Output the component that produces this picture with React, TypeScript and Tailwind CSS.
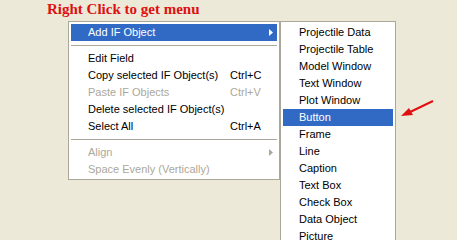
import React from 'react';

type Item = { label: string; shortcut?: string; disabled?: boolean; active?: boolean; sub?: boolean };

const mainItems: (Item | 'sep')[] = [
  { label: 'Add IF Object', sub: true, active: true },
  'sep',
  { label: 'Edit Field' },
  { label: 'Copy selected IF Object(s)', shortcut: 'Ctrl+C' },
  { label: 'Paste IF Objects', shortcut: 'Ctrl+V', disabled: true },
  { label: 'Delete selected IF Object(s)' },
  { label: 'Select All', shortcut: 'Ctrl+A' },
  'sep',
  { label: 'Align', sub: true, disabled: true },
  { label: 'Space Evenly (Vertically)', disabled: true },
];

const subItems = [
  'Projectile Data',
  'Projectile Table',
  'Model Window',
  'Text Window',
  'Plot Window',
  'Button',
  'Frame',
  'Line',
  'Caption',
  'Text Box',
  'Check Box',
  'Data Object',
  'Picture',
];

function SubArrow({ color }: { color: string }) {
  return (
    <svg width="4" height="7" viewBox="0 0 4 7" className="block">
      <path d="M0 0 L4 3.5 L0 7 Z" fill={color} />
    </svg>
  );
}

function MainMenu() {
  return (
    <div className="w-[212px] bg-white border border-[#aca899] px-[2px] pt-[2px] pb-[1px]">
      {mainItems.map((item, i) =>
        item === 'sep' ? (
          <div key={i} className="h-[9px] flex items-center">
            <div className="w-full h-px bg-[#aca899]" />
          </div>
        ) : (
          <div
            key={i}
            className={`h-[17px] flex items-center pl-[17px] pr-[4px] ${
              item.active ? 'bg-[#316ac5] text-white' : item.disabled ? 'text-[#aca899]' : 'text-black'
            }`}
          >
            <span className="flex-1">{item.label}</span>
            {item.shortcut && <span className="w-[43px]">{item.shortcut}</span>}
            {item.sub && <SubArrow color={item.active ? '#ffffff' : '#aca899'} />}
          </div>
        )
      )}
    </div>
  );
}

function SubMenu() {
  return (
    <div className="w-[116px] bg-white border border-[#aca899] px-[2px] pt-[2px] pb-[2px] self-start">
      {subItems.map((label) => (
        <div
          key={label}
          className={`h-[17px] flex items-center pl-[16px] ${
            label === 'Button' ? 'bg-[#316ac5] text-white' : 'text-black'
          }`}
        >
          {label}
        </div>
      ))}
    </div>
  );
}

export default function App() {
  return (
    <div
      className="relative w-[457px] h-[240px] overflow-hidden bg-[#ece9d8] text-[11px] leading-[17px]"
      style={{ fontFamily: '"Liberation Sans", Arial, sans-serif' }}
    >
      <div className="h-[21px] pl-[47px] pt-[1px] text-[15px] leading-[16px] font-bold text-[#dd1111] font-['Liberation_Serif',serif]">
        Right Click to get menu
      </div>
      <div className="flex items-start pl-[68px]">
        <MainMenu />
        <SubMenu />
      </div>
      <svg className="absolute left-[398px] top-[98px]" width="40" height="22" viewBox="0 0 40 22">
        <line x1="35" y1="3" x2="10" y2="15" stroke="#e01010" strokeWidth="2" />
        <path d="M3 18 L11 10 L15 17 Z" fill="#e01010" />
      </svg>
    </div>
  );
}
